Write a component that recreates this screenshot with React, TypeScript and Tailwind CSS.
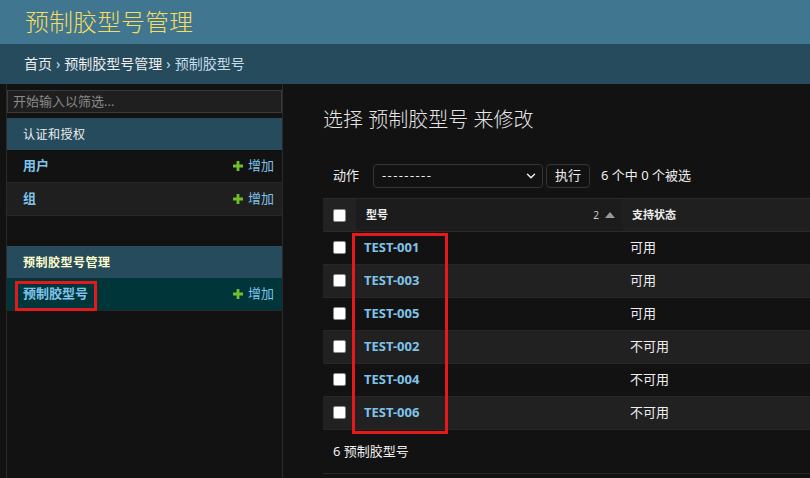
import { ChevronDown } from 'lucide-react'

const rows = [
  { code: 'TEST-001', status: '可用' },
  { code: 'TEST-003', status: '可用' },
  { code: 'TEST-005', status: '可用' },
  { code: 'TEST-002', status: '不可用' },
  { code: 'TEST-004', status: '不可用' },
  { code: 'TEST-006', status: '不可用' }
]

const PlusIcon = () => (
  <svg width="10" height="10" viewBox="0 0 10 10" className="shrink-0">
    <path d="M3.6 0h2.8v3.6H10v2.8H6.4V10H3.6V6.4H0V3.6h3.6z" fill="#70bf2b" />
  </svg>
)

const Checkbox = () => <span className="block h-[13px] w-[13px] rounded-[2px] border border-[#8a8a8a] bg-white" />

const SidebarRow = ({ label, alt, selected }: { label: string; alt?: boolean; selected?: boolean }) => (
  <div
    className={`relative flex h-[33px] items-center justify-between border-b border-[#272727] pl-4 pr-2 text-[13px] ${
      selected ? 'bg-[#00363a]' : alt ? 'bg-[#1f1f1f]' : 'bg-[#121212]'
    }`}
  >
    <span className="font-semibold text-[#7fc3ea]">{label}</span>
    <span className="flex items-center gap-[5px] text-[#7fc3ea]">
      <PlusIcon />
      增加
    </span>
    {selected && <span className="absolute left-[8px] top-[3px] h-[30px] w-[82px] border-[3px] border-[#e5191c]" />}
  </div>
)

export default function App() {
  return (
    <div
      className="flex h-[478px] w-[810px] flex-col overflow-hidden bg-[#121212] text-[#eeeeee]"
      style={{ fontFamily: '"Noto Sans", "Noto Sans CJK SC", sans-serif' }}
    >
      <header className="flex h-[44px] shrink-0 items-center bg-[#417690] px-[25px]">
        <h1 className="text-[24px] font-light leading-none text-[#f5dd5d]">预制胶型号管理</h1>
      </header>

      <nav className="flex h-[40px] shrink-0 items-center bg-[#264b5d] px-[24px] text-[14px] leading-none text-[#c4dce8]">
        <span className="text-[#eeeeee]">首页</span>
        <span className="mx-[4px]">›</span>
        <span className="text-[#eeeeee]">预制胶型号管理</span>
        <span className="mx-[4px]">›</span>
        <span>预制胶型号</span>
      </nav>

      <div className="flex min-h-0 flex-1">
        <div className="w-[7px] shrink-0 border-r border-[#2a2a2a]" />

        <aside className="w-[276px] shrink-0 border-r border-[#2a2a2a] pt-[6px]">
          <div className="flex h-[23px] items-center border border-[#3a3a3a] bg-[#1f1f1f] px-[5px] text-[13px] text-[#8a8a8a]">
            开始输入以筛选...
          </div>

          <div className="mt-[5px]">
            <div className="flex h-[32px] items-center bg-[#264b5d] pl-4 pt-[1px] text-[12px] tracking-[0.5px] text-[#eeeeee]">认证和授权</div>
            <SidebarRow label="用户" />
            <SidebarRow label="组" alt />
          </div>

          <div className="mt-[30px]">
            <div className="flex h-[32px] items-center bg-[#264b5d] pl-4 pt-[1px] text-[12px] font-bold tracking-[0.5px] text-[#ffffcc]">
              预制胶型号管理
            </div>
            <SidebarRow label="预制胶型号" selected />
          </div>
        </aside>

        <main className="min-w-0 flex-1 overflow-hidden pl-[40px] pt-[24px]">
          <h2 className="text-[20px] font-light leading-[24px] text-[#e6e6e6]">选择 预制胶型号 来修改</h2>

          <div className="mt-[32px] flex items-center pl-[10px] text-[13px]">
            <span className="mr-[14px]">动作</span>
            <div className="flex h-[24px] w-[170px] items-center justify-between rounded-[4px] border border-[#353535] pl-[8px] pr-[4px]">
              <span className="tracking-[1.4px]">---------</span>
              <ChevronDown size={14} strokeWidth={2.5} />
            </div>
            <div className="ml-[3px] flex h-[24px] w-[44px] items-center justify-center rounded-[4px] border border-[#353535]">执行</div>
            <span className="ml-[11px]">6 个中 0 个被选</span>
          </div>

          <div className="relative mt-[10px] w-[540px]">
            <div className="grid h-[34px] grid-cols-[33px_266px_1fr] border-y border-[#2a2a2a] text-[11px] font-bold">
              <div className="flex items-center bg-[#222222] pl-[10px]">
                <Checkbox />
              </div>
              <div className="flex items-center justify-between bg-[#1c1c1c] pl-[10px] pr-[7px]">
                <span>型号</span>
                <span className="flex items-center gap-[6px] text-[10px] font-normal text-[#cccccc]">
                  2
                  <svg width="10" height="6" viewBox="0 0 10 6">
                    <path d="M5 0L10 6H0z" fill="#9a9a9a" />
                  </svg>
                </span>
              </div>
              <div className="flex items-center bg-[#1f1f1f] pl-[10px]">支持状态</div>
            </div>

            {rows.map((row, i) => (
              <div
                key={row.code}
                className={`grid h-[33px] grid-cols-[33px_266px_1fr] border-b border-[#272727] text-[13px] ${
                  i % 2 === 1 ? 'bg-[#212121]' : 'bg-[#121212]'
                }`}
              >
                <div className="pl-[10px] pt-[9px]">
                  <Checkbox />
                </div>
                <div className="flex items-center pl-[8px] font-bold text-[#7fc3ea]">{row.code}</div>
                <div className="flex items-center pl-[8px]">{row.status}</div>
              </div>
            ))}

            <span className="absolute left-[29px] top-[35px] h-[201px] w-[96px] border-[3px] border-[#e5191c]" />

            <div className="flex h-[44px] items-center border-b border-[#272727] pl-[10px] pt-[1px] text-[13px]">6 预制胶型号</div>
          </div>
        </main>
      </div>
    </div>
  )
}
